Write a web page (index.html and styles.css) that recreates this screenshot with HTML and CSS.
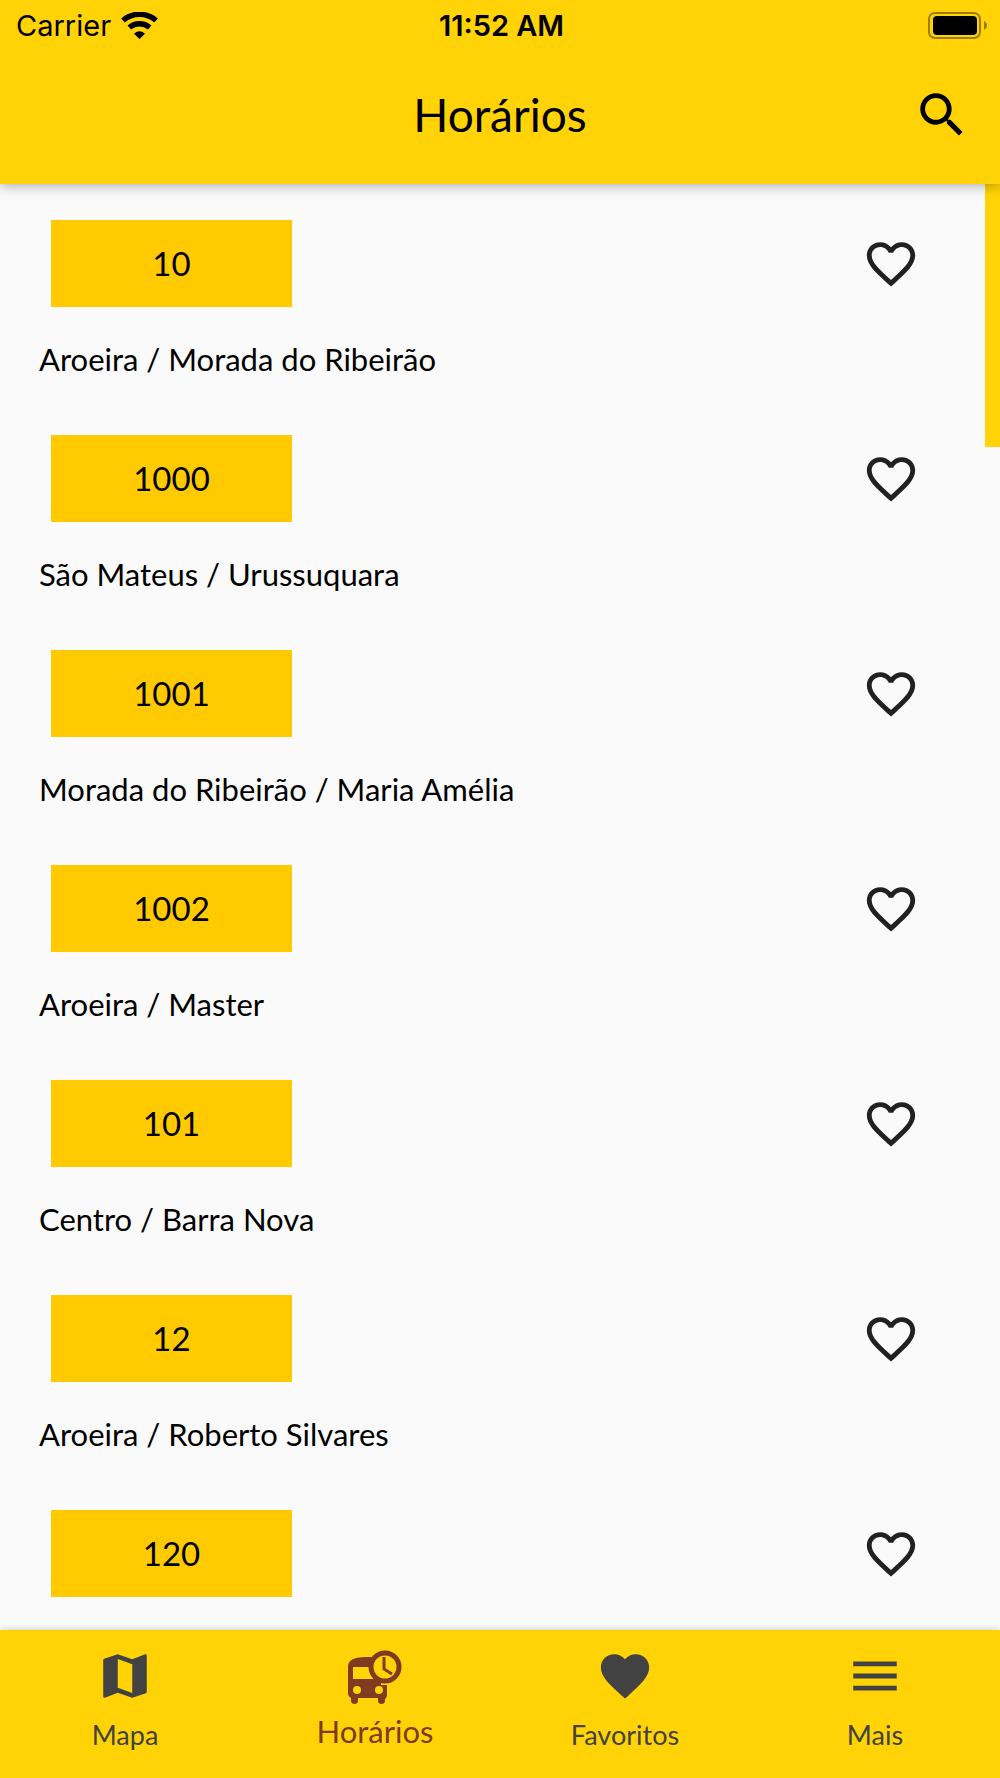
FILE: index.html
```html
<!DOCTYPE html>
<html lang="pt-BR">
<head>
    <meta charset="UTF-8">
    <meta name="viewport" content="width=device-width, initial-scale=1.0">
    <title>Horários</title>
    <link rel="stylesheet" href="styles.css">
</head>
<body>
    <!-- Shared heart outline used by every line -->
    <svg class="sprite" aria-hidden="true">
        <symbol id="heart-outline" viewBox="0 0 24 24">
            <path d="M16.5 3c-1.74 0-3.41.81-4.5 2.09C10.91 3.81 9.24 3 7.5 3 4.42 3 2 5.42 2 8.5c0 3.78 3.4 6.86 8.55 11.54L12 21.35l1.45-1.32C18.6 15.36 22 12.28 22 8.5 22 5.42 19.58 3 16.5 3zm-4.4 15.55l-.1.1-.1-.1C7.14 14.24 4 11.39 4 8.5 4 6.5 5.5 5 7.5 5c1.54 0 3.04.99 3.57 2.36h1.87C13.46 5.99 14.96 5 16.5 5c2 0 3.5 1.5 3.5 3.5 0 2.89-3.14 5.74-7.9 10.05z"/>
        </symbol>
    </svg>

    <header class="header">
        <div class="status-bar">
            <div class="carrier">
                <span>Carrier</span>
                <svg class="wifi" viewBox="0 0 37 27" aria-hidden="true">
                    <path d="M2 8.500A25 25 0 0 1 35 8.500" fill="none" stroke="#000" stroke-width="5.500"/>
                    <path d="M8.300 15.500A16 16 0 0 1 28.700 15.500" fill="none" stroke="#000" stroke-width="5.500"/>
                    <path d="M18.500 27l-5.500-5.300c3-3.400 8-3.400 11 0z"/>
                </svg>
            </div>
            <span class="time">11:52 AM</span>
            <svg class="battery" viewBox="0 0 59 27" aria-hidden="true">
                <rect x="1" y="1" width="51" height="25" rx="6" fill="none" stroke="#9a7f06" stroke-width="2"/>
                <rect x="5" y="4" width="44" height="19" rx="4"/>
                <path d="M56 9c4 2 4 7 0 9z" fill="#9a7f06"/>
            </svg>
        </div>
        <div class="title-bar">
            <h1>Horários</h1>
            <button class="icon-btn" type="button" aria-label="Buscar">
                <svg class="icon" viewBox="0 0 24 24"><path d="M15.500 14h-.79l-.28-.27C15.410 12.590 16 11.110 16 9.500 16 5.910 13.090 3 9.500 3S3 5.910 3 9.500 5.910 16 9.500 16c1.610 0 3.090-.59 4.230-1.570l.27.28v.79l5 4.990L20.490 19l-4.990-5zm-6 0C7.010 14 5 11.990 5 9.500S7.010 5 9.500 5 14 7.010 14 9.500 11.990 14 9.500 14z"/></svg>
            </button>
        </div>
    </header>

    <main class="content">
        <ul class="lines">
            <li class="line">
                <div class="line-top">
                    <span class="number">10</span>
                    <button class="icon-btn fav" type="button" aria-label="Favoritar 10"><svg class="icon"><use href="#heart-outline"/></svg></button>
                </div>
                <p class="name">Aroeira / Morada do Ribeirão</p>
            </li>
            <li class="line">
                <div class="line-top">
                    <span class="number">1000</span>
                    <button class="icon-btn fav" type="button" aria-label="Favoritar 1000"><svg class="icon"><use href="#heart-outline"/></svg></button>
                </div>
                <p class="name">São Mateus / Urussuquara</p>
            </li>
            <li class="line">
                <div class="line-top">
                    <span class="number">1001</span>
                    <button class="icon-btn fav" type="button" aria-label="Favoritar 1001"><svg class="icon"><use href="#heart-outline"/></svg></button>
                </div>
                <p class="name">Morada do Ribeirão / Maria Amélia</p>
            </li>
            <li class="line">
                <div class="line-top">
                    <span class="number">1002</span>
                    <button class="icon-btn fav" type="button" aria-label="Favoritar 1002"><svg class="icon"><use href="#heart-outline"/></svg></button>
                </div>
                <p class="name">Aroeira / Master</p>
            </li>
            <li class="line">
                <div class="line-top">
                    <span class="number">101</span>
                    <button class="icon-btn fav" type="button" aria-label="Favoritar 101"><svg class="icon"><use href="#heart-outline"/></svg></button>
                </div>
                <p class="name">Centro / Barra Nova</p>
            </li>
            <li class="line">
                <div class="line-top">
                    <span class="number">12</span>
                    <button class="icon-btn fav" type="button" aria-label="Favoritar 12"><svg class="icon"><use href="#heart-outline"/></svg></button>
                </div>
                <p class="name">Aroeira / Roberto Silvares</p>
            </li>
            <li class="line">
                <div class="line-top">
                    <span class="number">120</span>
                    <button class="icon-btn fav" type="button" aria-label="Favoritar 120"><svg class="icon"><use href="#heart-outline"/></svg></button>
                </div>
            </li>
        </ul>
        <div class="scroll-thumb"></div>
    </main>

    <nav class="tabs">
        <a class="tab" href="#mapa">
            <svg class="icon" viewBox="0 0 24 24" aria-hidden="true"><path d="M20.500 3l-.16.030L15 5.100 9 3 3.360 4.900c-.21.070-.36.250-.36.480V20.500c0 .28.220.5.5.5l.16-.030L9 18.900l6 2.100 5.640-1.900c.21-.070.36-.250.36-.480V3.500c0-.28-.22-.5-.5-.5zM15 19l-6-2.110V5l6 2.110V19z"/></svg>
            <span>Mapa</span>
        </a>
        <a class="tab active" href="#horarios" aria-current="page">
            <!-- Bus with a clock over its corner -->
            <svg class="icon" viewBox="0 -3 58 58" aria-hidden="true">
                <path d="M2 17C2 8 10 7 26 7h9v28h6v9c0 3-1 4-2 5v2c0 4-7 4-7 0v-3H12v3c0 4-7 4-7 0v-3c-2-1-3-3-3-5zM7 17v12h21V17z" fill-rule="evenodd"/>
                <circle cx="11" cy="40" r="4" fill="#ffd305"/>
                <circle cx="33" cy="40" r="4" fill="#ffd305"/>
                <circle cx="39" cy="17" r="14" fill="#ffd305" stroke="#7f3a20" stroke-width="5"/>
                <path d="M38 7v12l8 5" fill="none" stroke="#7f3a20" stroke-width="3"/>
            </svg>
            <span>Horários</span>
        </a>
        <a class="tab" href="#favoritos">
            <svg class="icon" viewBox="0 0 24 24" aria-hidden="true"><path d="M12 21.350l-1.450-1.320C5.400 15.360 2 12.280 2 8.500 2 5.420 4.420 3 7.500 3c1.740 0 3.410.81 4.500 2.090C13.090 3.810 14.760 3 16.500 3 19.580 3 22 5.420 22 8.500c0 3.780-3.400 6.860-8.550 11.540L12 21.350z"/></svg>
            <span>Favoritos</span>
        </a>
        <a class="tab" href="#mais">
            <svg class="icon" viewBox="0 0 24 24" aria-hidden="true"><path d="M3 18h18v-2H3v2zm0-5h18v-2H3v2zm0-7v2h18V6H3z"/></svg>
            <span>Mais</span>
        </a>
    </nav>
</body>
</html>
```
FILE: styles.css
```css
* {
    box-sizing: border-box;
}

body {
    font-family: Lato, 'Open Sans', sans-serif;
    font-size: 31px;
    margin: 0;
    height: 100vh;
    display: flex;
    flex-direction: column;
    background-color: #fafafa;
    color: #000;
}

.sprite {
    display: none;
}

.icon {
    display: block;
    width: 58px;
    height: 58px;
    fill: currentColor;
}

.icon-btn {
    padding: 0;
    border: none;
    background: none;
    color: #000;
    cursor: pointer;
}

/* Header */
.header {
    position: relative;
    z-index: 1;
    background-color: #ffd305;
    padding-bottom: 22px;
    box-shadow: 0 2px 12px rgba(0, 0, 0, 0.3);
}

.status-bar {
    display: grid;
    grid-template-columns: 1fr auto 1fr;
    align-items: center;
    height: 50px;
    padding: 0 13px 0 16px;
    font-family: Inter, sans-serif;
    font-size: 29px;
}

.carrier {
    display: flex;
    align-items: center;
    gap: 10px;
}

.wifi {
    width: 37px;
    height: 27px;
}

.time {
    font-weight: 600;
}

.battery {
    width: 59px;
    height: 27px;
    justify-self: end;
}

.title-bar {
    display: grid;
    grid-template-columns: 1fr auto 1fr;
    align-items: center;
    height: 112px;
    padding: 18px 29px 0;
}

.title-bar h1 {
    grid-column: 2;
    margin: 0;
    font-size: 46px;
    font-weight: 400;
    line-height: 60px;
}

.title-bar .icon-btn {
    justify-self: end;
}

/* Bus lines */
.content {
    position: relative;
    flex: 1;
    min-height: 0;
}

.lines {
    height: 100%;
    margin: 0;
    padding: 36px 80px 0 39px;
    list-style: none;
    display: flex;
    flex-direction: column;
    gap: 56px;
    overflow-y: auto;
    scrollbar-width: none;
}

.line-top {
    display: flex;
    align-items: center;
    justify-content: space-between;
    padding-left: 12px;
}

.number {
    width: 241px;
    line-height: 87px;
    background-color: #ffcb00;
    font-size: 33px;
    text-align: center;
}

.fav {
    color: #212121;
}

.name {
    margin: 32px 0 0;
    line-height: 40px;
}

.scroll-thumb {
    position: absolute;
    top: 0;
    right: 0;
    width: 15px;
    height: 263px;
    background-color: #ffd305;
}

/* Bottom tabs */
.tabs {
    display: grid;
    grid-template-columns: repeat(4, 1fr);
    background-color: #ffd305;
    box-shadow: 0 -1px 6px rgba(0, 0, 0, 0.15);
}

.tab {
    display: flex;
    flex-direction: column;
    align-items: center;
    gap: 12px;
    padding: 17px 0 25px;
    color: #424242;
    font-size: 27px;
    line-height: 36px;
    text-decoration: none;
}

.tab.active {
    gap: 8px;
    color: #7f3a20;
    font-size: 31px;
}
```
